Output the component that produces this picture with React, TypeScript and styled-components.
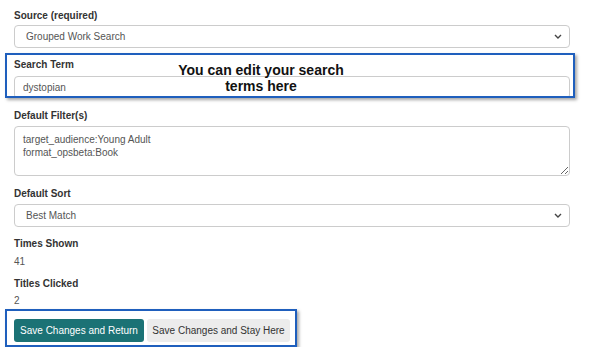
import React from 'react'
import styled, { createGlobalStyle } from 'styled-components'

const GlobalStyle = createGlobalStyle`
  body {
    margin: 0;
    background: #fff;
    font-family: "Liberation Sans", Arial, sans-serif;
  }
`

const Form = styled.form`
  width: 556px;
  padding: 10px 0 0 14px;
  display: flex;
  flex-direction: column;
`

const Field = styled.div<{ $gap?: number }>`
  display: flex;
  flex-direction: column;
  margin-bottom: ${p => (p.$gap ?? 11)}px;
`

const Label = styled.label<{ $gap?: number }>`
  font-size: 10px;
  line-height: 12px;
  font-weight: 700;
  color: #333;
  margin-bottom: ${p => (p.$gap ?? 4)}px;
`

const Value = styled.div`
  font-size: 10px;
  line-height: 12px;
  color: #555;
`

const SelectWrap = styled.div`
  position: relative;
`

const Select = styled.select`
  appearance: none;
  width: 100%;
  height: 23px;
  box-sizing: border-box;
  border: 1px solid #ccc;
  border-radius: 4px;
  background: #fff;
  padding: 0 0 0 11px;
  font-family: inherit;
  font-size: 10px;
  color: #555;
`

const Chevron = styled.svg`
  position: absolute;
  right: 8px;
  top: 9px;
  pointer-events: none;
`

const Input = styled.input`
  width: 100%;
  height: 23px;
  box-sizing: border-box;
  border: 1px solid #ccc;
  border-radius: 4px;
  padding: 0 8px;
  font-family: inherit;
  font-size: 10px;
  color: #555;
`

const TextArea = styled.textarea`
  width: 100%;
  height: 50px;
  box-sizing: border-box;
  border: 1px solid #ccc;
  border-radius: 4px;
  padding: 6px 8px;
  font-family: inherit;
  font-size: 10px;
  line-height: 13px;
  color: #555;
  resize: vertical;
`

const Highlight = styled.div`
  position: relative;
  border: 2px solid #1f5fbd;
  box-shadow: 2px 2px 3px rgba(0, 0, 0, 0.35);
  margin: 0 -5px 0 -9px;
  padding: 0 3px 0 7px;
  overflow: hidden;
`

const SearchHighlight = styled(Highlight)`
  box-sizing: border-box;
  height: 45px;
  padding-top: 4px;
  margin-top: 5px;
  margin-bottom: 12px;
`

const ButtonHighlight = styled(Highlight)`
  align-self: flex-start;
  display: flex;
  gap: 3px;
  padding: 8px 5px 3px 7px;
  margin: 2px 0 0 -9px;
`

const Callout = styled.div`
  position: absolute;
  top: 7px;
  left: 149px;
  width: 210px;
  text-align: center;
  font-size: 14px;
  line-height: 16px;
  font-weight: 700;
  color: #111;
`

const Button = styled.button<{ $primary?: boolean }>`
  height: 23px;
  border: none;
  border-radius: 3px;
  padding: 0;
  width: ${p => (p.$primary ? 130 : 143)}px;
  font-family: inherit;
  font-size: 10px;
  background: ${p => (p.$primary ? '#1b7275' : '#ececec')};
  color: ${p => (p.$primary ? '#fff' : '#333')};
`

const Arrow = () => (
  <Chevron width="8" height="5" viewBox="0 0 8 5">
    <path d="M1 1l3 3 3-3" fill="none" stroke="#444" strokeWidth="1.4" />
  </Chevron>
)

export default function App() {
  return (
    <>
      <GlobalStyle />
      <Form onSubmit={e => e.preventDefault()}>
        <Field $gap={0}>
          <Label $gap={3}>Source (required)</Label>
          <SelectWrap>
            <Select defaultValue="grouped">
              <option value="grouped">Grouped Work Search</option>
            </Select>
            <Arrow />
          </SelectWrap>
        </Field>

        <SearchHighlight>
          <Label as="div" $gap={5}>Search Term</Label>
          <Input defaultValue="dystopian" />
          <Callout>
            You can edit your search
            <br />
            terms here
          </Callout>
        </SearchHighlight>

        <Field $gap={12}>
          <Label>Default Filter(s)</Label>
          <TextArea defaultValue={'target_audience:Young Adult\nformat_opsbeta:Book'} />
        </Field>

        <Field $gap={11}>
          <Label>Default Sort</Label>
          <SelectWrap>
            <Select defaultValue="best">
              <option value="best">Best Match</option>
            </Select>
            <Arrow />
          </SelectWrap>
        </Field>

        <Field $gap={10}>
          <Label $gap={6}>Times Shown</Label>
          <Value>41</Value>
        </Field>

        <Field $gap={0}>
          <Label $gap={5}>Titles Clicked</Label>
          <Value>2</Value>
        </Field>

        <ButtonHighlight>
          <Button $primary>Save Changes and Return</Button>
          <Button>Save Changes and Stay Here</Button>
        </ButtonHighlight>
      </Form>
    </>
  )
}
